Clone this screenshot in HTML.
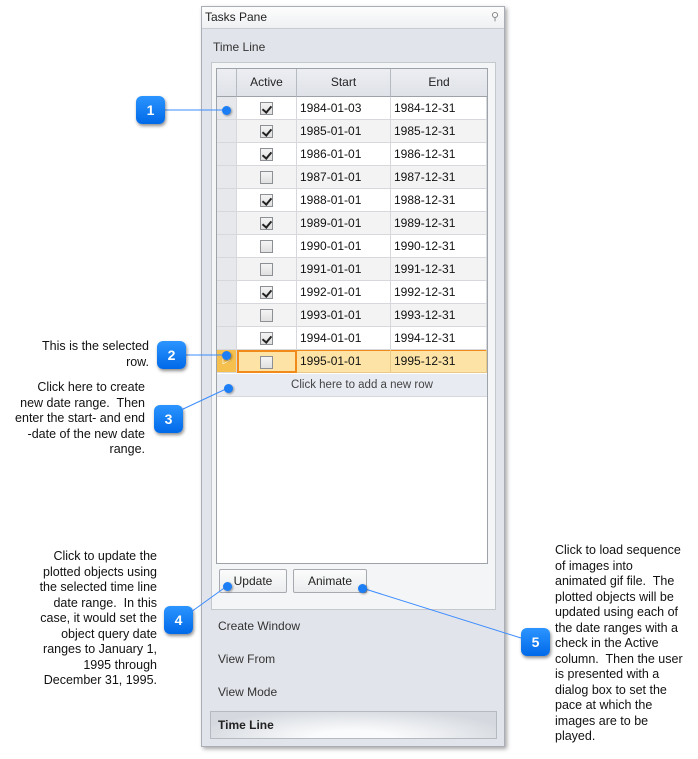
<!DOCTYPE html>
<html><head><meta charset="utf-8"><style>
*{margin:0;padding:0;box-sizing:border-box}
body{width:698px;height:759px;background:#fff;position:relative;overflow:hidden;font-family:"Liberation Sans",Arial,sans-serif;}
.a{position:absolute}
.pane{left:201px;top:6px;width:304px;height:741px;background:#e1e4ea;border:1px solid #a9adb5;box-shadow:2px 2px 4px rgba(0,0,0,.35)}
.hdr{left:0;top:0;width:302px;height:22px;background:linear-gradient(#fdfdfd,#eef0f2);border-bottom:1px solid #c8ccd2;font-size:12px;color:#222;padding:3px 0 0 3px}
.lbl{font-size:12px;color:#333}
.grp{left:211px;top:62px;width:285px;height:548px;background:#f4f5f7;border:1px solid #c4c7cc}
.grid{left:216px;top:68px;width:272px;height:496px;background:#fff;border:1px solid #9ea3aa}
.row{position:absolute;left:0;width:270px;height:23px;font-size:12px;color:#111}
.row div{position:absolute;top:0;height:23px;border-right:1px solid #d6d8dc;border-bottom:1px solid #d6d8dc;line-height:22px}
.c0{left:0;width:20px;background:#e6e8ec}
.c1{left:20px;width:60px}
.c2{left:80px;width:94px;padding-left:3px}
.c3{left:174px;width:96px;padding-left:3px}
.cb{position:absolute;left:23px;top:5px;width:13px;height:13px;border:1px solid #8c8f94;background:linear-gradient(#f4f4f4,#e0e0e0)}
.cb.k::after{content:"";position:absolute;left:3px;top:1px;width:4px;height:7px;border:solid #222;border-width:0 2px 2px 0;transform:rotate(40deg)}
.th{position:absolute;top:0;height:28px;background:linear-gradient(#eceef2,#dfe2e8);border-right:1px solid #b6bac1;border-bottom:1px solid #9ea3aa;font-size:12px;color:#222;text-align:center;line-height:27px}
.btn{height:24px;border:1px solid #a6aab0;border-radius:2px;background:linear-gradient(#fcfcfc,#eaecee);font-size:12px;text-align:center;line-height:22px;color:#222}
.badge{width:29px;height:28px;border-radius:6px;background:linear-gradient(#2c95ff,#0069e8);color:#fff;font-weight:bold;font-size:14px;text-align:center;line-height:28px;box-shadow:1px 2px 3px rgba(0,0,0,.45)}
.dot{width:9px;height:9px;border-radius:50%;background:#1c7ef5;box-shadow:1px 1px 2px rgba(0,0,0,.4)}
.txt{font-size:12.5px;line-height:15.5px;color:#111}
</style></head><body>
<div class="a pane">
<div class="a hdr">Tasks Pane<span style="position:absolute;right:5px;top:3px;color:#888;font-size:11px">⚲</span></div>
</div>
<div class="a lbl" style="left:213px;top:40px">Time Line</div>
<div class="a grp"></div>
<div class="a grid">
<div class="th" style="left:0;width:20px"></div>
<div class="th" style="left:20px;width:60px">Active</div>
<div class="th" style="left:80px;width:94px">Start</div>
<div class="th" style="left:174px;width:96px;border-right:none">End</div>
<div class="row" style="top:28px"><div class="c0"></div><div class="c1"><span class="cb k"></span></div><div class="c2">1984-01-03</div><div class="c3">1984-12-31</div></div>
<div class="row" style="top:51px;background:#f3f3f3"><div class="c0"></div><div class="c1"><span class="cb k"></span></div><div class="c2">1985-01-01</div><div class="c3">1985-12-31</div></div>
<div class="row" style="top:74px"><div class="c0"></div><div class="c1"><span class="cb k"></span></div><div class="c2">1986-01-01</div><div class="c3">1986-12-31</div></div>
<div class="row" style="top:97px;background:#f3f3f3"><div class="c0"></div><div class="c1"><span class="cb"></span></div><div class="c2">1987-01-01</div><div class="c3">1987-12-31</div></div>
<div class="row" style="top:120px"><div class="c0"></div><div class="c1"><span class="cb k"></span></div><div class="c2">1988-01-01</div><div class="c3">1988-12-31</div></div>
<div class="row" style="top:143px;background:#f3f3f3"><div class="c0"></div><div class="c1"><span class="cb k"></span></div><div class="c2">1989-01-01</div><div class="c3">1989-12-31</div></div>
<div class="row" style="top:166px"><div class="c0"></div><div class="c1"><span class="cb"></span></div><div class="c2">1990-01-01</div><div class="c3">1990-12-31</div></div>
<div class="row" style="top:189px;background:#f3f3f3"><div class="c0"></div><div class="c1"><span class="cb"></span></div><div class="c2">1991-01-01</div><div class="c3">1991-12-31</div></div>
<div class="row" style="top:212px"><div class="c0"></div><div class="c1"><span class="cb k"></span></div><div class="c2">1992-01-01</div><div class="c3">1992-12-31</div></div>
<div class="row" style="top:235px;background:#f3f3f3"><div class="c0"></div><div class="c1"><span class="cb"></span></div><div class="c2">1993-01-01</div><div class="c3">1993-12-31</div></div>
<div class="row" style="top:258px"><div class="c0"></div><div class="c1"><span class="cb k"></span></div><div class="c2">1994-01-01</div><div class="c3">1994-12-31</div></div>
<div class="row" style="top:281px;background:#fde3a6;border-top:1px solid #f08a1a;border-bottom:1px solid #f08a1a"><div class="c0" style="background:#f5c04e;top:-1px;height:23px;font-size:10px;text-align:center;color:#fff">▷</div><div class="c1" style="border:2px solid #f08a1a;top:-1px;height:23px"><span class="cb" style="left:21px;top:4px"></span></div><div class="c2" style="border-color:#e8c98a;top:-1px">1995-01-01</div><div class="c3" style="border-color:#e8c98a;top:-1px">1995-12-31</div></div>
<div class="row" style="top:305px;background:#e9ebf3;border-bottom:1px solid #d6d8dc;text-align:center;line-height:22px;color:#444;font-size:11.5px;padding-left:20px">Click here to add a new row</div>
</div>
<div class="a btn" style="left:219px;top:569px;width:68px">Update</div>
<div class="a btn" style="left:293px;top:569px;width:74px">Animate</div>
<div class="a lbl" style="left:218px;top:619px">Create Window</div>
<div class="a lbl" style="left:218px;top:652px">View From</div>
<div class="a lbl" style="left:218px;top:685px">View Mode</div>
<div class="a" style="left:210px;top:711px;width:287px;height:28px;border:1px solid #b5b9c0;background:radial-gradient(ellipse at 50% 100%,#fafbfc 20%,#d5d9df 80%);font-size:12px;font-weight:bold;color:#222;padding:6px 0 0 7px">Time Line</div>
<svg class="a" style="left:0;top:0" width="698" height="759">
<g stroke="#3b8cff" stroke-width="1" fill="none">
<line x1="165" y1="110" x2="226" y2="110"/>
<line x1="185" y1="355" x2="226" y2="355"/>
<line x1="181" y1="410" x2="228" y2="388"/>
<line x1="191" y1="612" x2="227" y2="586"/>
<line x1="521" y1="638" x2="362" y2="588"/>
</g></svg>
<div class="a dot" style="left:222px;top:106px"></div>
<div class="a dot" style="left:222px;top:351px"></div>
<div class="a dot" style="left:224px;top:384px"></div>
<div class="a dot" style="left:223px;top:582px"></div>
<div class="a dot" style="left:358px;top:584px"></div>
<div class="a badge" style="left:136px;top:96px">1</div>
<div class="a badge" style="left:157px;top:341px">2</div>
<div class="a badge" style="left:154px;top:405px">3</div>
<div class="a badge" style="left:164px;top:606px">4</div>
<div class="a badge" style="left:521px;top:628px">5</div>
<div class="a txt" style="right:549px;top:339px;text-align:right;width:150px">This is the selected<br>row.</div>
<div class="a txt" style="right:553px;top:380px;text-align:right;width:150px">Click here to create<br>new date range.&nbsp; Then<br>enter the start- and end<br>-date of the new date<br>range.</div>
<div class="a txt" style="right:541px;top:549px;text-align:right;width:160px">Click to update the<br>plotted objects using<br>the selected time line<br>date range.&nbsp; In this<br>case, it would set the<br>object query date<br>ranges to January 1,<br>1995 through<br>December 31, 1995.</div>
<div class="a txt" style="left:555px;top:543px;width:143px">Click to load sequence<br>of images into<br>animated gif file.&nbsp; The<br>plotted objects will be<br>updated using each of<br>the date ranges with a<br>check in the Active<br>column.&nbsp; Then the user<br>is presented with a<br>dialog box to set the<br>pace at which the<br>images are to be<br>played.</div>
</body></html>
